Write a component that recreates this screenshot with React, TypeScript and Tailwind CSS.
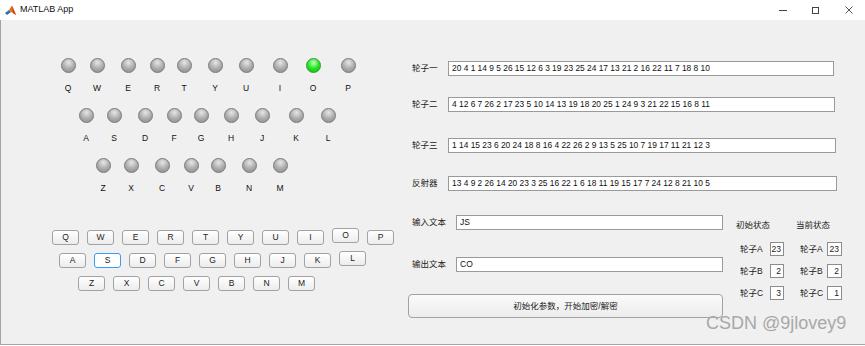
const FONT = "font-['Liberation_Sans','Noto_Sans_CJK_SC',sans-serif]";

type Key = { k: string; cls: string; on?: boolean };

const lampRows: { pad: string; gap: string; keys: Key[] }[] = [
  {
    pad: 'pl-[59px]',
    gap: 'mt-[38px]',
    keys: [
      { k: 'Q', cls: '' },
      { k: 'W', cls: 'ml-[13px]' },
      { k: 'E', cls: 'ml-[15px]' },
      { k: 'R', cls: 'ml-[13px]' },
      { k: 'T', cls: 'ml-[11px]' },
      { k: 'Y', cls: 'ml-[15px]' },
      { k: 'U', cls: 'ml-[15px]' },
      { k: 'I', cls: 'ml-[18px]' },
      { k: 'O', cls: 'ml-[17px]', on: true },
      { k: 'P', cls: 'ml-[19px]' },
    ],
  },
  {
    pad: 'pl-[77px]',
    gap: 'mt-[15px]',
    keys: [
      { k: 'A', cls: '' },
      { k: 'S', cls: 'ml-[12px]' },
      { k: 'D', cls: 'ml-[15px]' },
      { k: 'F', cls: 'ml-[13px]' },
      { k: 'G', cls: 'ml-[11px]' },
      { k: 'H', cls: 'ml-[14px]' },
      { k: 'J', cls: 'ml-[15px]' },
      { k: 'K', cls: 'ml-[18px]' },
      { k: 'L', cls: 'ml-[16px]' },
    ],
  },
  {
    pad: 'pl-[94px]',
    gap: 'mt-[15px]',
    keys: [
      { k: 'Z', cls: '' },
      { k: 'X', cls: 'ml-[12px]' },
      { k: 'C', cls: 'ml-[15px]' },
      { k: 'V', cls: 'ml-[13px]' },
      { k: 'B', cls: 'ml-[11px]' },
      { k: 'N', cls: 'ml-[15px]' },
      { k: 'M', cls: 'ml-[15px]' },
    ],
  },
];

const keyRows = [
  { pad: 'pl-[51px]', keys: ['Q', 'W', 'E', 'R', 'T', 'Y', 'U', 'I', 'O', 'P'] },
  { pad: 'pl-[58px]', keys: ['A', 'S', 'D', 'F', 'G', 'H', 'J', 'K', 'L'] },
  { pad: 'pl-[77px]', keys: ['Z', 'X', 'C', 'V', 'B', 'N', 'M'] },
];

const rotors = [
  { label: '轮子一', w: 'w-[386px]', gap: 'mt-[41px]', value: '20 4 1 14 9 5 26 15 12 6 3 19 23 25 24 17 13 21 2 16 22 11 7 18 8 10' },
  { label: '轮子二', w: 'w-[387px]', gap: 'mt-[21px]', value: '4 12 6 7 26 2 17 23 5 10 14 13 19 18 20 25 1 24 9 3 21 22 15 16 8 11' },
  { label: '轮子三', w: 'w-[388px]', gap: 'mt-[26px]', value: '1 14 15 23 6 20 24 18 8 16 4 22 26 2 9 13 5 25 10 7 19 17 11 21 12 3' },
  { label: '反射器', w: 'w-[389px]', gap: 'mt-[23px]', value: '13 4 9 2 26 14 20 23 3 25 16 22 1 6 18 11 19 15 17 7 24 12 8 21 10 5' },
];

function Lamp({ on }: { on?: boolean }) {
  return on ? (
    <div className="w-[15px] h-[15px] rounded-full border border-[#2f9a2f] bg-[radial-gradient(circle_at_50%_30%,#c8ffc0_0%,#22e622_50%,#10b410_100%)]" />
  ) : (
    <div className="w-[15px] h-[15px] rounded-full border border-[#787878] bg-[radial-gradient(circle_at_50%_28%,#e6e6e6_0%,#aaaaaa_55%,#8a8a8a_100%)]" />
  );
}

function KeyButton({ k }: { k: string }) {
  const focused = k === 'S';
  const raised = k === 'O' || k === 'L';
  return (
    <div
      className={`w-[27px] h-[15px] rounded-[3px] border flex items-center justify-center text-[8.5px] text-[#222] ${
        focused ? 'border-[#3a9cf6] bg-white' : 'border-[#a2a2a2] bg-gradient-to-b from-white to-[#ececec]'
      } ${raised ? '-mt-[2px]' : ''}`}
    >
      {k}
    </div>
  );
}

function NumBox({ v, w }: { v: string; w: string }) {
  return (
    <div className={`${w} h-[14px] border border-[#8c8c8c] bg-white text-[8.5px] text-[#222] flex items-center justify-end pr-[2px]`}>
      {v}
    </div>
  );
}

function MatlabIcon() {
  return (
    <svg width="11" height="11" viewBox="0 0 11 11">
      <polygon points="0,8 4,5 6,7 2,10" fill="#2f6fb5" />
      <polygon points="4,5 7,0.5 11,10 8,8 6,7" fill="#e8701a" />
      <polygon points="7,0.5 8,8 11,10" fill="#c2401a" />
    </svg>
  );
}

export default function App() {
  return (
    <div className={`w-[865px] h-[346px] bg-white relative overflow-hidden ${FONT}`}>
      {/* title bar */}
      <div className="h-[20px] flex items-center">
        <div className="ml-[5px]">
          <MatlabIcon />
        </div>
        <span className="ml-[4px] text-[9px] text-[#111]">MATLAB App</span>
        <div className="ml-auto flex h-full">
          <div className="w-[33px] flex items-center justify-center">
            <div className="w-[8px] h-px bg-[#444]" />
          </div>
          <div className="w-[33px] flex items-center justify-center">
            <div className="w-[7px] h-[7px] border border-[#444]" />
          </div>
          <div className="w-[33px] flex items-center justify-center">
            <svg width="8" height="8" viewBox="0 0 8 8">
              <path d="M0.5 0.5 L7.5 7.5 M7.5 0.5 L0.5 7.5" stroke="#444" strokeWidth="0.9" />
            </svg>
          </div>
        </div>
      </div>

      {/* app canvas */}
      <div className="h-[325px] bg-[#f0f0f0] border-l border-b border-[#a3a3a3] flex">
        {/* lamps + keyboard */}
        <div className="w-[394px] flex flex-col">
          {lampRows.map((row, ri) => (
            <div key={ri} className={`flex ${row.pad} ${row.gap}`}>
              {row.keys.map((item) => (
                <div key={item.k} className={`w-[16px] flex flex-col items-center ${item.cls}`}>
                  <Lamp on={item.on} />
                  <div className="mt-[10px] h-[10px] leading-[10px] text-[8.5px] text-[#111]">{item.k}</div>
                </div>
              ))}
            </div>
          ))}

          <div className="mt-[37px] flex flex-col gap-[8px]">
            {keyRows.map((row, ri) => (
              <div key={ri} className={`flex items-start gap-[8px] ${row.pad}`}>
                {row.keys.map((k) => (
                  <KeyButton key={k} k={k} />
                ))}
              </div>
            ))}
          </div>
        </div>

        {/* rotors + text io */}
        <div className="flex-1 flex flex-col pl-[13px]">
          {rotors.map((r) => (
            <div key={r.label} className={`flex items-center h-[15px] ${r.gap}`}>
              <div className="ml-[4px] w-[36px] text-[8.5px] text-[#222]">{r.label}</div>
              <div className={`${r.w} h-[15px] border border-[#9a9a9a] bg-white pl-[3px] flex items-center text-[8.4px] text-[#111] whitespace-nowrap`}>
                {r.value}
              </div>
            </div>
          ))}

          <div className="mt-[24px] flex">
            <div className="flex flex-col">
              <div className="flex items-center h-[15px]">
                <div className="ml-[4px] w-[44px] text-[8.5px] text-[#222]">输入文本</div>
                <div className="w-[267px] h-[15px] border border-[#9a9a9a] bg-white pl-[3px] flex items-center text-[8.5px] text-[#111]">JS</div>
              </div>
              <div className="mt-[27px] flex items-center h-[15px]">
                <div className="ml-[4px] w-[44px] text-[8.5px] text-[#222]">输出文本</div>
                <div className="w-[267px] h-[15px] border border-[#9a9a9a] bg-white pl-[3px] flex items-center text-[8.5px] text-[#111]">CO</div>
              </div>
              <div className="mt-[22px] w-[315px] h-[24px] rounded-[4px] border border-[#a2a2a2] bg-gradient-to-b from-[#fafafa] to-[#ededed] flex items-center justify-center text-[8.5px] text-[#222]">
                初始化参数，开始加密/解密
              </div>
            </div>

            <div className="ml-[13px] flex gap-[12px]">
              <div className="flex flex-col">
                <div className="mt-[5px] h-[10px] leading-[10px] text-[8.5px] text-[#222]">初始状态</div>
                <div className="mt-[12px] flex flex-col gap-[8px]">
                  {[['A', '23'], ['B', '2'], ['C', '3']].map(([n, v]) => (
                    <div key={n} className="flex items-center pl-[4px]">
                      <div className="w-[30px] text-[8.5px] text-[#222]">轮子{n}</div>
                      <NumBox v={v} w="w-[14px]" />
                    </div>
                  ))}
                </div>
              </div>
              <div className="flex flex-col">
                <div className="mt-[5px] h-[10px] leading-[10px] text-[8.5px] text-[#222]">当前状态</div>
                <div className="mt-[12px] flex flex-col gap-[8px]">
                  {[['A', '23'], ['B', '2'], ['C', '1']].map(([n, v]) => (
                    <div key={n} className="flex items-center pl-[4px]">
                      <div className="w-[27px] text-[8.5px] text-[#222]">轮子{n}</div>
                      <NumBox v={v} w="w-[15px]" />
                    </div>
                  ))}
                </div>
              </div>
            </div>
          </div>
        </div>
      </div>

      {/* watermark overlay */}
      <div className="absolute left-[706px] top-[314px] text-[18px] leading-none text-[#a8a8a8] whitespace-nowrap">
        CSDN @9jlovey9
      </div>
    </div>
  );
}
